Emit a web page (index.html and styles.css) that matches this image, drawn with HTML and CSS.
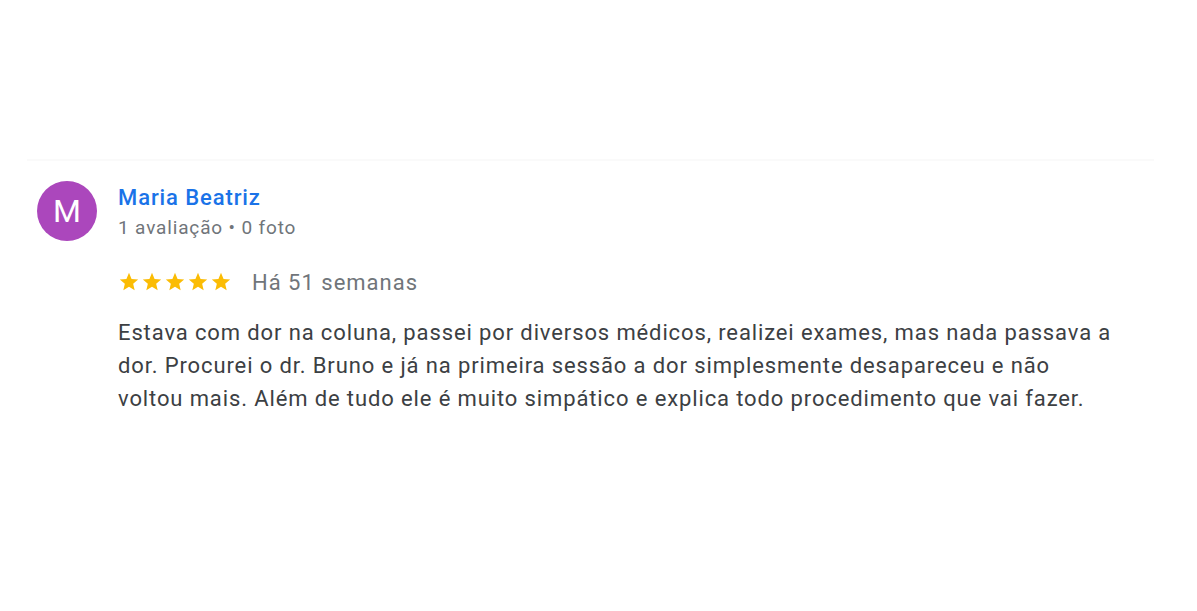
FILE: index.html
```html
<!DOCTYPE html>
<html lang="pt">
<head>
<meta charset="utf-8">
<link rel="stylesheet" href="styles.css">
</head>
<body>
<div class="review">
  <div class="header">
    <div class="avatar">M</div>
    <div class="who">
      <div class="name">Maria Beatriz</div>
      <div class="meta">1 avaliação • 0 foto</div>
    </div>
  </div>
  <div class="content">
    <div class="rating">
      <div class="stars">
        <svg viewBox="0 0 24 24"><path d="M12 17.27L18.18 21l-1.64-7.03L22 9.24l-7.19-.61L12 2 9.19 8.63 2 9.24l5.46 4.73L5.82 21z"/></svg>
        <svg viewBox="0 0 24 24"><path d="M12 17.27L18.18 21l-1.64-7.03L22 9.24l-7.19-.61L12 2 9.19 8.63 2 9.24l5.46 4.73L5.82 21z"/></svg>
        <svg viewBox="0 0 24 24"><path d="M12 17.27L18.18 21l-1.64-7.03L22 9.24l-7.19-.61L12 2 9.19 8.63 2 9.24l5.46 4.73L5.82 21z"/></svg>
        <svg viewBox="0 0 24 24"><path d="M12 17.27L18.18 21l-1.64-7.03L22 9.24l-7.19-.61L12 2 9.19 8.63 2 9.24l5.46 4.73L5.82 21z"/></svg>
        <svg viewBox="0 0 24 24"><path d="M12 17.27L18.18 21l-1.64-7.03L22 9.24l-7.19-.61L12 2 9.19 8.63 2 9.24l5.46 4.73L5.82 21z"/></svg>
      </div>
      <span class="date">Há 51 semanas</span>
    </div>
    <p class="text">Estava com dor na coluna, passei por diversos médicos, realizei exames, mas nada passava a dor. Procurei o dr. Bruno e já na primeira sessão a dor simplesmente desapareceu e não voltou mais. Além de tudo ele é muito simpático e explica todo procedimento que vai fazer.</p>
  </div>
</div>
</body>
</html>
```
FILE: styles.css
```css
html, body {
  margin: 0;
  padding: 0;
  background: #ffffff;
}
body {
  font-family: Roboto, "Liberation Sans", Arial, sans-serif;
}
.review {
  margin: 159px 0 0 27px;
  width: 1127px;
  border-top: 2px solid #fafafa;
  padding-top: 20px;
}
.header {
  display: flex;
  align-items: flex-start;
  padding-left: 10px;
}
.avatar {
  width: 60px;
  height: 60px;
  border-radius: 50%;
  background: #ab47bc;
  color: #fff;
  font-size: 32px;
  display: flex;
  align-items: center;
  justify-content: center;
  flex: none;
}
.who {
  margin-left: 21px;
  padding-top: 3px;
}
.name {
  color: #1a73e8;
  font-size: 22px;
  font-weight: 500;
  letter-spacing: 0.9px;
  line-height: 28px;
}
.meta {
  color: #70757a;
  font-size: 19px;
  letter-spacing: 0.85px;
  line-height: 24px;
  margin-top: 4px;
}
.content {
  padding-left: 91px;
  margin-top: 26px;
}
.rating {
  display: flex;
  align-items: center;
  height: 30px;
}
.stars {
  display: flex;
  gap: 1px;
}
.stars svg {
  width: 22px;
  height: 22px;
  fill: #fbbc04;
}
.date {
  color: #70757a;
  font-size: 22px;
  letter-spacing: 1px;
  margin-left: 20px;
}
.text {
  margin: 19px 0 0;
  width: 998px;
  color: #3c4043;
  font-size: 22px;
  letter-spacing: 0.88px;
  line-height: 33px;
}
```
